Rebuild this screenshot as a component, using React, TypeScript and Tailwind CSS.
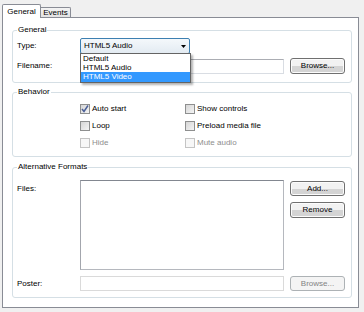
import type { ReactNode } from "react";

function Group({ label, className, children }: { label: string; className?: string; children: ReactNode }) {
  return (
    <div className={"relative ml-[9px] w-[340px] rounded-[3px] border border-[#d5dfe5] " + (className ?? "")}>
      <span className="absolute -top-[6px] left-[4px] bg-white px-[1px] leading-[10px]">{label}</span>
      {children}
    </div>
  );
}

function Button({ text, disabled, className }: { text: string; disabled?: boolean; className?: string }) {
  return (
    <div
      className={
        "flex w-[55px] items-center justify-center rounded-[3px] border leading-[10px] " +
        (disabled
          ? "border-[#adb2b5] bg-[#f4f4f4] text-[#838383] "
          : "border-[#707070] bg-gradient-to-b from-[#f2f2f2] from-50% to-[#d4d4d4] to-50% shadow-[inset_0_0_0_1px_#fcfcfc] ") +
        (className ?? "")
      }
    >
      {text}
    </div>
  );
}

function Check({ label, checked, disabled }: { label: string; checked?: boolean; disabled?: boolean }) {
  return (
    <div className="flex h-[17px] items-center">
      <div
        className={
          "flex h-[10px] w-[10px] items-center justify-center border " +
          (disabled ? "border-[#c4c4c4] bg-[#f7f7f7]" : "border-[#8e8f8f] bg-gradient-to-br from-[#d6d6d6] to-[#f4f4f4]")
        }
      >
        {checked && (
          <svg width="8" height="8" viewBox="0 0 8 8">
            <path d="M1 4 L3 6.5 L7 0.5" fill="none" stroke="#4a5f97" strokeWidth="1.5" />
          </svg>
        )}
      </div>
      <span className={"ml-[2px] leading-[10px] " + (disabled ? "text-[#8d8d8d]" : "")}>{label}</span>
    </div>
  );
}

export default function App() {
  return (
    <div
      className="h-[312px] w-[364px] bg-[#f0f0f0] pl-[2px] pt-[4px] text-[8px] text-black"
      style={{ fontFamily: '"Liberation Sans", Arial, sans-serif' }}
    >
      <div className="flex h-[13px] items-end">
        <div className="relative z-10 -mb-[1px] flex h-[14px] w-[39px] items-start justify-center rounded-t-[2px] border border-b-0 border-[#898c95] bg-white pt-[2px] leading-[10px]">
          General
        </div>
        <div className="flex h-[10px] w-[30px] items-start justify-center rounded-tr-[2px] border border-b-0 border-l-0 border-[#898c95] bg-gradient-to-b from-[#f4f4f4] to-[#e2e2e2] leading-[9px]">
          Events
        </div>
      </div>

      <div className="h-[291px] w-[357px] border border-[#898c95] bg-white pt-[12px]">
        <Group label="General" className="h-[53px] pt-[7px]">
          <div className="flex h-[16px] items-center pl-[4px]">
            <span className="w-[63px] leading-[10px]">Type:</span>
            <div className="relative h-[16px] w-[110px]">
              <div className="flex h-full w-full items-center rounded-[2px] border border-[#3c7fb1] bg-gradient-to-b from-[#f4f8fb] to-[#e3ebf2] pl-[3px] leading-[10px]">
                HTML5 Audio
                <svg className="ml-auto mr-[3px]" width="5" height="3" viewBox="0 0 5 3">
                  <path d="M0 0 H5 L2.5 3 Z" fill="#000" />
                </svg>
              </div>
              <div className="absolute left-0 top-[15px] z-20 w-[111px] border border-[#646464] bg-white shadow-[2px_2px_2px_rgba(0,0,0,0.3)]">
                <div className="h-[9px] pl-[2px] leading-[9px]">Default</div>
                <div className="h-[9px] pl-[2px] leading-[9px]">HTML5 Audio</div>
                <div className="h-[10px] bg-[#3399ff] pl-[2px] leading-[10px] text-white">HTML5 Video</div>
              </div>
            </div>
          </div>
          <div className="mt-[4px] flex h-[16px] items-center pl-[4px]">
            <span className="w-[63px] leading-[10px]">Filename:</span>
            <div className="h-[15px] w-[204px] border border-[#d9dde3] border-t-[#abadb3] bg-white" />
            <Button text="Browse..." className="ml-[6px] h-[16px]" />
          </div>
        </Group>

        <Group label="Behavior" className="mt-[9px] h-[65px] pt-[7px]">
          <div className="flex pl-[67px]">
            <div className="w-[105px]">
              <Check label="Auto start" checked />
              <Check label="Loop" />
              <Check label="Hide" disabled />
            </div>
            <div>
              <Check label="Show controls" />
              <Check label="Preload media file" />
              <Check label="Mute audio" disabled />
            </div>
          </div>
        </Group>

        <Group label="Alternative Formats" className="mt-[10px] h-[131px] pt-[12px]">
          <div className="flex pl-[4px]">
            <span className="w-[63px] pt-[4px] leading-[10px]">Files:</span>
            <div className="h-[90px] w-[204px] border border-[#b5b8be] border-t-[#828790] border-l-[#a3a6ad] bg-white" />
            <div className="ml-[6px] pt-[1px]">
              <Button text="Add..." className="h-[15px]" />
              <Button text="Remove" className="mt-[6px] h-[16px]" />
            </div>
          </div>
          <div className="mt-[6px] flex h-[15px] items-center pl-[4px]">
            <span className="w-[63px] leading-[10px]">Poster:</span>
            <div className="h-[15px] w-[204px] border border-[#dadada] bg-white" />
            <Button text="Browse..." disabled className="ml-[6px] h-[15px]" />
          </div>
        </Group>
      </div>
    </div>
  );
}
